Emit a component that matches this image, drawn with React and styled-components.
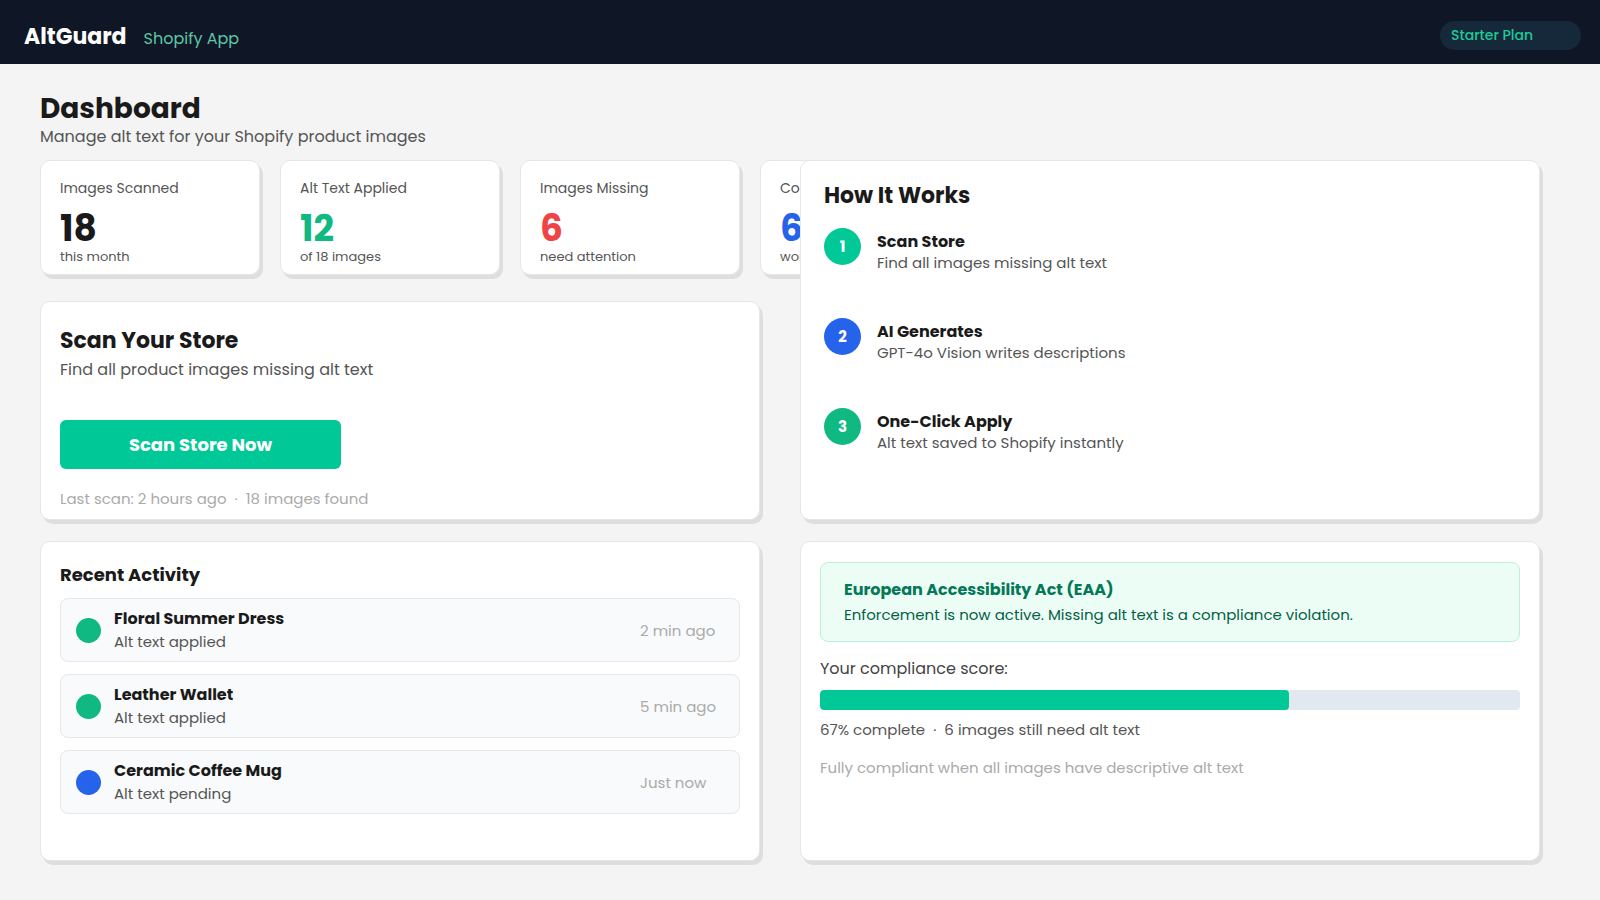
import styled, { createGlobalStyle } from "styled-components";

const GlobalStyle = createGlobalStyle`
  * { box-sizing: border-box; }
  body {
    margin: 0;
    background: #f4f4f4;
    font-family: "Poppins", "Open Sans", "Noto Sans", sans-serif;
    color: #1a1a1a;
  }
`;

const stats = [
  { label: "Images Scanned", value: "18", color: "#1a1a1a", sub: "this month" },
  { label: "Alt Text Applied", value: "12", color: "#10b981", sub: "of 18 images" },
  { label: "Images Missing", value: "6", color: "#ef4444", sub: "need attention" },
  { label: "Compliance Score", value: "67%", color: "#2563eb", sub: "working towards EAA" },
];

const steps = [
  { n: 1, color: "#00c896", title: "Scan Store", desc: "Find all images missing alt text" },
  { n: 2, color: "#2563eb", title: "AI Generates", desc: "GPT-4o Vision writes descriptions" },
  { n: 3, color: "#10b981", title: "One-Click Apply", desc: "Alt text saved to Shopify instantly" },
];

const activity = [
  { name: "Floral Summer Dress", status: "Alt text applied", time: "2 min ago", color: "#10b981" },
  { name: "Leather Wallet", status: "Alt text applied", time: "5 min ago", color: "#10b981" },
  { name: "Ceramic Coffee Mug", status: "Alt text pending", time: "Just now", color: "#2563eb" },
];

export default function App() {
  const score = 67;
  return (
    <>
      <GlobalStyle />
      <Header>
        <Brand>
          <Logo>AltGuard</Logo>
          <Tag>Shopify App</Tag>
        </Brand>
        <Plan>Starter Plan</Plan>
      </Header>
      <Main>
        <PageTitle>Dashboard</PageTitle>
        <PageSub>Manage alt text for your Shopify product images</PageSub>
        <Grid>
          <Stats>
            {stats.map((s) => (
              <StatCard key={s.label}>
                <StatLabel>{s.label}</StatLabel>
                <StatValue color={s.color}>{s.value}</StatValue>
                <StatSub>{s.sub}</StatSub>
              </StatCard>
            ))}
          </Stats>
          <HowCard>
            <HowTitle>How It Works</HowTitle>
            <Steps>
              {steps.map((s) => (
                <Step key={s.n}>
                  <StepNum color={s.color}>{s.n}</StepNum>
                  <StepText>
                    <StepTitle>{s.title}</StepTitle>
                    <StepDesc>{s.desc}</StepDesc>
                  </StepText>
                </Step>
              ))}
            </Steps>
          </HowCard>
          <ScanCard>
            <CardTitle>Scan Your Store</CardTitle>
            <CardSub>Find all product images missing alt text</CardSub>
            <ScanButton>Scan Store Now</ScanButton>
            <Muted>Last scan: 2 hours ago &nbsp;·&nbsp; 18 images found</Muted>
          </ScanCard>
          <ActivityCard>
            <SectionTitle>Recent Activity</SectionTitle>
            <List>
              {activity.map((a) => (
                <Item key={a.name}>
                  <Dot color={a.color} />
                  <ItemText>
                    <ItemName>{a.name}</ItemName>
                    <ItemStatus>{a.status}</ItemStatus>
                  </ItemText>
                  <Time>{a.time}</Time>
                </Item>
              ))}
            </List>
          </ActivityCard>
          <ComplianceCard>
            <Alert>
              <AlertTitle>European Accessibility Act (EAA)</AlertTitle>
              <AlertText>Enforcement is now active. Missing alt text is a compliance violation.</AlertText>
            </Alert>
            <ScoreLabel>Your compliance score:</ScoreLabel>
            <Bar>
              <Fill style={{ width: `${score}%` }} />
            </Bar>
            <ScoreText>{score}% complete &nbsp;·&nbsp; 6 images still need alt text</ScoreText>
            <Note>Fully compliant when all images have descriptive alt text</Note>
          </ComplianceCard>
        </Grid>
      </Main>
    </>
  );
}

const Header = styled.header`
  height: 64px;
  background: #0f1626;
  display: flex;
  align-items: center;
  justify-content: space-between;
  padding: 0 19px 0 24px;
`;
const Brand = styled.div`
  display: flex;
  align-items: baseline;
  gap: 17px;
  margin-top: 8px;
`;
const Logo = styled.div`
  color: #fff;
  font-size: 22px;
  font-weight: 700;
`;
const Tag = styled.div`
  color: #5ec7a4;
  font-size: 16px;
`;
const Plan = styled.div`
  background: #15293a;
  color: #1fc99a;
  font-size: 14px;
  font-weight: 500;
  height: 29px;
  width: 141px;
  border-radius: 15px;
  padding: 0 11px;
  display: flex;
  align-items: center;
  margin-top: 6px;
`;

const Main = styled.main`
  padding: 28px 40px 40px;
`;
const PageTitle = styled.h1`
  margin: 0;
  font-size: 28px;
  font-weight: 700;
  line-height: 34px;
`;
const PageSub = styled.p`
  margin: 0 0 12px;
  font-size: 16px;
  color: #555;
  line-height: 22px;
`;

const Grid = styled.div`
  display: grid;
  grid-template-columns: 720px 740px;
  grid-template-rows: 141px 219px 341px;
  column-gap: 40px;
`;

const Card = styled.div`
  background: #fff;
  border: 1px solid #e6e6e6;
  border-radius: 10px;
  box-shadow: 3px 4px 0 #dedede;
`;

const Stats = styled.div`
  grid-column: 1;
  grid-row: 1;
  display: grid;
  grid-template-columns: repeat(4, 220px);
  gap: 20px;
  align-self: start;
`;
const StatCard = styled(Card)`
  height: 115px;
  padding: 17px 19px;
`;
const StatLabel = styled.div`
  font-size: 14px;
  color: #555;
  line-height: 20px;
  white-space: nowrap;
`;
const StatValue = styled.div`
  font-size: 36px;
  font-weight: 700;
  color: ${(p) => p.color};
  line-height: 40px;
  margin-top: 11px;
`;
const StatSub = styled.div`
  font-size: 13px;
  color: #555;
  line-height: 15px;
  white-space: nowrap;
`;

const HowCard = styled(Card)`
  grid-column: 2;
  grid-row: 1 / span 2;
  height: 360px;
  padding: 20px 23px;
`;
const HowTitle = styled.h2`
  margin: 0;
  font-size: 22px;
  font-weight: 700;
  line-height: 30px;
`;
const Steps = styled.div`
  display: flex;
  flex-direction: column;
  gap: 45px;
  margin-top: 17px;
`;
const Step = styled.div`
  display: flex;
  align-items: flex-start;
  gap: 16px;
`;
const StepNum = styled.div`
  width: 37px;
  height: 37px;
  border-radius: 50%;
  background: ${(p) => p.color};
  color: #fff;
  font-weight: 700;
  font-size: 15px;
  display: flex;
  align-items: center;
  justify-content: center;
  flex-shrink: 0;
`;
const StepText = styled.div`
  padding-top: 3px;
`;
const StepTitle = styled.div`
  font-size: 16px;
  font-weight: 700;
  line-height: 22px;
`;
const StepDesc = styled.div`
  font-size: 15px;
  color: #555;
  line-height: 20px;
`;

const ScanCard = styled(Card)`
  grid-column: 1;
  grid-row: 2;
  height: 219px;
  padding: 23px 19px;
  overflow: hidden;
`;
const CardTitle = styled.h2`
  margin: 0;
  font-size: 22px;
  font-weight: 700;
  line-height: 32px;
`;
const CardSub = styled.p`
  margin: 1px 0 0;
  font-size: 16px;
  color: #555;
  line-height: 24px;
`;
const ScanButton = styled.button`
  display: block;
  margin-top: 38px;
  width: 281px;
  height: 49px;
  border: none;
  border-radius: 6px;
  background: #00c896;
  color: #fff;
  font-family: inherit;
  font-size: 18px;
  font-weight: 700;
  cursor: pointer;
`;
const Muted = styled.div`
  margin-top: 19px;
  font-size: 15px;
  color: #aaa;
  line-height: 22px;
`;

const ActivityCard = styled(Card)`
  grid-column: 1;
  grid-row: 3;
  margin-top: 21px;
  height: 320px;
  padding: 20px 19px;
`;
const SectionTitle = styled.h3`
  margin: 0 0 10px;
  font-size: 18px;
  font-weight: 700;
  line-height: 26px;
`;
const List = styled.div`
  display: flex;
  flex-direction: column;
  gap: 12px;
`;
const Item = styled.div`
  height: 64px;
  background: #f9fafb;
  border: 1px solid #e5e7eb;
  border-radius: 8px;
  display: flex;
  align-items: center;
  padding: 0 24px 0 15px;
  gap: 13px;
`;
const Dot = styled.span`
  width: 25px;
  height: 25px;
  border-radius: 50%;
  background: ${(p) => p.color};
  flex-shrink: 0;
`;
const ItemText = styled.div`
  flex: 1;
`;
const ItemName = styled.div`
  font-size: 16px;
  font-weight: 700;
  line-height: 22px;
`;
const ItemStatus = styled.div`
  font-size: 15px;
  color: #555;
  line-height: 23px;
`;
const Time = styled.div`
  width: 75px;
  white-space: nowrap;
  font-size: 15px;
  color: #aaa;
`;

const ComplianceCard = styled(Card)`
  grid-column: 2;
  grid-row: 3;
  margin-top: 21px;
  height: 320px;
  padding: 20px 19px;
`;
const Alert = styled.div`
  background: #ecfdf5;
  border: 1px solid #bbf0d9;
  border-radius: 8px;
  padding: 16px 23px 12px;
`;
const AlertTitle = styled.div`
  font-size: 16px;
  font-weight: 700;
  color: #047857;
  line-height: 22px;
`;
const AlertText = styled.div`
  font-size: 15px;
  color: #065f46;
  line-height: 28px;
`;
const ScoreLabel = styled.div`
  margin-top: 16px;
  font-size: 16px;
  color: #444;
  line-height: 22px;
`;
const Bar = styled.div`
  margin-top: 10px;
  height: 20px;
  background: #e2e8f0;
  border-radius: 4px;
  overflow: hidden;
`;
const Fill = styled.div`
  height: 100%;
  background: #00c896;
  border-radius: 4px;
`;
const ScoreText = styled.div`
  margin-top: 9px;
  font-size: 15px;
  color: #555;
  line-height: 22px;
`;
const Note = styled.div`
  margin-top: 16px;
  font-size: 15px;
  color: #aaa;
  line-height: 22px;
`;
